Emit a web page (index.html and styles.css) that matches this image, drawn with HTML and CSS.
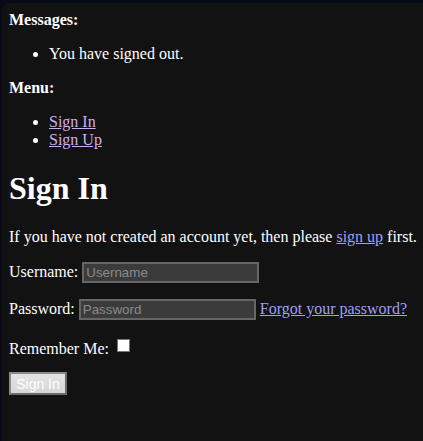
FILE: index.html
```html
<!DOCTYPE html>
<html lang="en">
<head>
<meta charset="utf-8">
<title>Sign In</title>
<link rel="stylesheet" href="styles.css">
</head>
<body>
<div class="page">
  <div class="section-title">Messages:</div>
  <ul class="list">
    <li>You have signed out.</li>
  </ul>
  <div class="section-title">Menu:</div>
  <ul class="list">
    <li><a href="#" class="visited">Sign In</a></li>
    <li><a href="#" class="visited">Sign Up</a></li>
  </ul>
  <h1 class="title">Sign In</h1>
  <p class="row intro">If you have not created an account yet, then please <a href="#">sign up</a> first.</p>
  <form class="form">
    <p class="row">
      <label for="login">Username:</label>
      <input id="login" class="field" type="text" placeholder="Username">
    </p>
    <p class="row">
      <label for="password">Password:</label>
      <input id="password" class="field" type="password" placeholder="Password">
      <a href="#">Forgot your password?</a>
    </p>
    <p class="row row-check">
      <label for="remember">Remember Me:</label>
      <input id="remember" class="check" type="checkbox">
    </p>
    <button type="button" class="submit">Sign In</button>
  </form>
</div>
</body>
</html>
```

FILE: styles.css
```css
html {
  margin: 0;
  padding: 3px 0 0 2px;
  background: #080a14;
  height: 100%;
  box-sizing: border-box;
}
body {
  margin: 0;
  min-height: 100%;
  background: #121212;
  border-top-left-radius: 8px;
  color: #ffffff;
  font-family: "Liberation Serif", "Times New Roman", serif;
  font-size: 16px;
}
.page {
  padding: 8px 2px 20px 7px;
}
.section-title {
  font-weight: bold;
}
.list {
  margin: 16px 0;
  padding-left: 40px;
}
.title {
  font-size: 32px;
  font-weight: bold;
  margin: 21px 0;
}
.row {
  margin: 16px 0;
}
.row-check {
  margin-bottom: 14px;
}
.intro {
  white-space: nowrap;
}
.form {
  margin: 0;
}
a {
  color: #9e9eff;
}
a.visited {
  color: #d0adf0;
}
.field {
  box-sizing: border-box;
  width: 177px;
  height: 21px;
  margin: 0;
  padding: 1px 2px;
  background: #3b3b3b;
  border: 2px solid #666666;
  color: #fff;
  font-family: "Liberation Sans", Arial, sans-serif;
  font-size: 13.33px;
  vertical-align: baseline;
}
.field::placeholder {
  color: #8a8a8a;
}
.check {
  appearance: none;
  -webkit-appearance: none;
  width: 13px;
  height: 13px;
  margin: 3px 3px 3px 4px;
  background: #fff;
  border: 1px solid #767676;
  box-sizing: border-box;
  vertical-align: -1px;
}
.submit {
  display: block;
  box-sizing: border-box;
  width: 58px;
  height: 23px;
  margin: 0;
  padding: 1px 4px;
  background: linear-gradient(#e2e2e2, #d6d6d6);
  border: 2px solid #7a7a7a;
  border-color: #8a8a8a #6a6a6a #6a6a6a #8a8a8a;
  color: #ffffff;
  font-family: "Liberation Sans", Arial, sans-serif;
  font-size: 14px;
}
```
